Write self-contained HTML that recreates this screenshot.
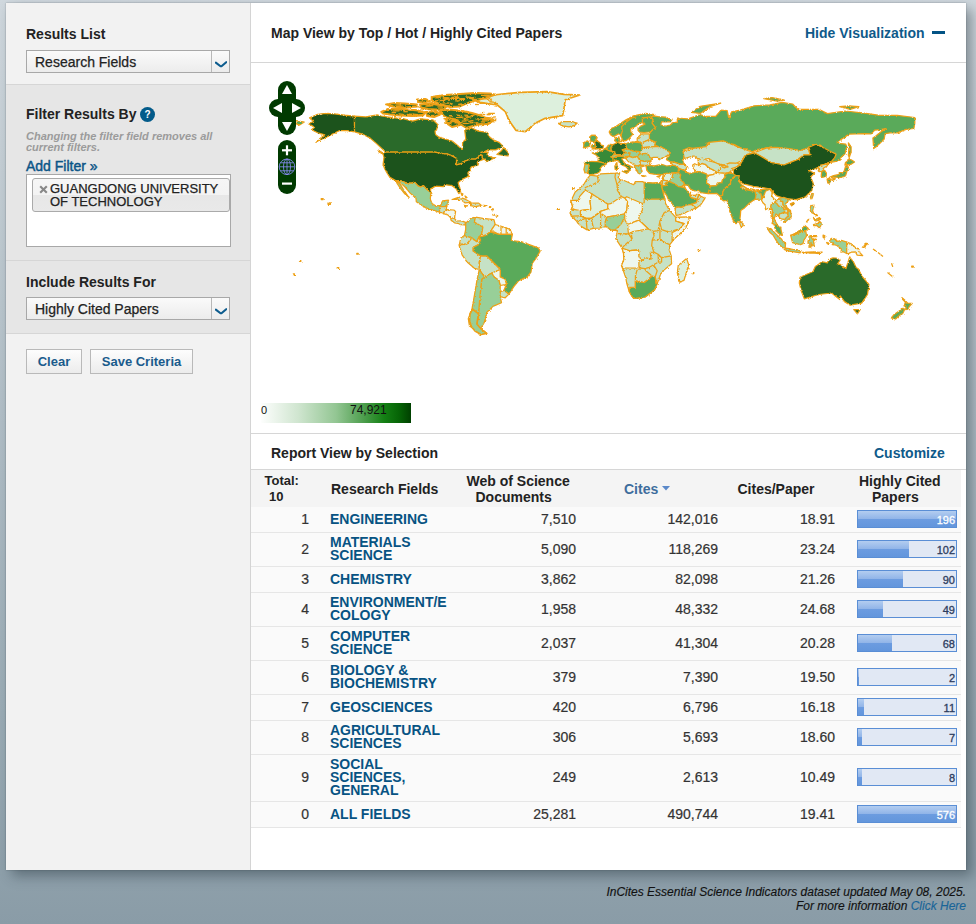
<!DOCTYPE html>
<html><head><meta charset="utf-8">
<style>
*{margin:0;padding:0;box-sizing:border-box}
html,body{width:976px;height:924px;overflow:hidden}
body{font-family:"Liberation Sans",sans-serif;background:linear-gradient(#d0d8de 0px,#c5cfd5 160px,#b2bfc7 410px,#9cadb6 700px,#8a9ca7 924px);position:relative;color:#222}
.abs{position:absolute}
.tk{-webkit-text-stroke:0.25px currentColor}
#panel{position:absolute;left:6px;top:3px;width:960px;height:867px;background:#fff;box-shadow:6px 6px 12px rgba(30,45,55,.42),0 0 1.5px rgba(30,45,55,.4)}
#side{position:absolute;left:0;top:0;width:245px;height:867px;background:#f2f2f2;border-right:1px solid #d4d4d4}
.sec{position:absolute;left:0;width:244px;border-bottom:1px solid #d6d6d6}
.h{position:absolute;font-weight:bold;font-size:14px;color:#222;white-space:nowrap;line-height:16px}
.sel{position:absolute;left:20px;width:204px;height:23px;border:1px solid #a8a8a8;background:linear-gradient(#fafafa,#ececec)}
.sel .t{-webkit-text-stroke:0.25px currentColor;position:absolute;left:8px;top:3px;font-size:14px;line-height:16px;color:#222;white-space:nowrap}
.sel .d{position:absolute;left:184px;top:0;width:1px;height:21px;background:#b8b8b8}
.sel svg{position:absolute;left:188px;top:9.5px}
.btn{position:absolute;top:346px;height:25px;border:1px solid #b9b9b9;background:linear-gradient(#fdfdfd,#ececec);font-weight:bold;font-size:13px;color:#1a5b8c;line-height:23px;text-align:center;white-space:nowrap}
.blue{color:#0f5a8a}
.th{position:absolute;font-weight:bold;font-size:14px;line-height:16px;color:#222;white-space:nowrap}
.num{-webkit-text-stroke:0.2px currentColor;position:absolute;font-size:14px;line-height:16px;color:#333;white-space:nowrap;text-align:right}
.fld{position:absolute;font-weight:bold;font-size:14px;line-height:13px;color:#075383;white-space:nowrap}
.bar{position:absolute;left:857px;width:100px;height:18px;border:1px solid #5a8ed5;background:#e1e8f4}
.bar .fill{position:absolute;left:0;top:0;height:16px;background:linear-gradient(#b3cdf0 0%,#90b4e8 50%,#6c9ce0 50%,#6396dc 100%)}
.bar .bt{position:absolute;right:1px;top:2.6px;font-size:11px;line-height:13px;font-weight:normal;-webkit-text-stroke:0.3px currentColor}
</style></head><body>
<div id="panel">
  <div id="side">
    <div class="sec" style="top:0;height:82px;background:#f2f2f2">
      <div class="h" style="left:20px;top:23px">Results List</div>
      <div class="sel" style="top:47px"><div class="t">Research Fields</div><div class="d"></div>
        <svg width="12" height="7" viewBox="0 0 12 7"><path d="M0.8,1.6 L5.2,5 Q6,5.6 6.8,5 L11.2,1.2" fill="none" stroke="#0d5c8e" stroke-width="2.1" stroke-linecap="round"/></svg></div>
    </div>
    <div class="sec" style="top:82px;height:176px;background:#e6e6e6">
      <div class="h" style="left:20px;top:103px;top:21px">Filter Results By</div>
      <div class="abs" style="left:134px;top:22px;width:15px;height:15px;border-radius:50%;background:#035b8a;color:#fff;font-weight:bold;font-size:10px;line-height:15px;text-align:center">?</div>
      <div class="abs" style="left:20px;top:45.8px;font-size:11px;line-height:11.3px;font-style:italic;font-weight:bold;color:#9b9b9b;white-space:nowrap">Changing the filter field removes all<br>current filters.</div>
      <div class="abs" style="left:20px;top:73px;font-size:14px;-webkit-text-stroke:0.45px currentColor;color:#0b5587;line-height:16px;white-space:nowrap">Add Filter »</div>
      <div class="abs" style="left:20px;top:89px;width:205px;height:73px;background:#fff;border:1px solid #a8a8a8">
        <div class="abs" style="left:5px;top:3px;width:198px;height:34px;border:1px solid #aaa;border-radius:3px;background:linear-gradient(#f6f6f6 0,#f3f3f3 50%,#e7e7e7 50%,#e9e9e9 100%)">
          <svg class="abs" style="left:6px;top:6px" width="9" height="9" viewBox="0 0 9 9"><path d="M1.2,1.2 L7.8,7.8 M7.8,1.2 L1.2,7.8" stroke="#888" stroke-width="2.1"/></svg>
          <div class="abs tk" style="left:17px;top:2.5px;font-size:13px;line-height:13px;color:#222;white-space:nowrap">GUANGDONG UNIVERSITY<br>OF TECHNOLOGY</div>
        </div>
      </div>
    </div>
    <div class="sec" style="top:258px;height:73px;background:#e6e6e6">
      <div class="h" style="left:20px;top:13px">Include Results For</div>
      <div class="sel" style="top:36px"><div class="t">Highly Cited Papers</div><div class="d"></div>
        <svg width="12" height="7" viewBox="0 0 12 7"><path d="M0.8,1.6 L5.2,5 Q6,5.6 6.8,5 L11.2,1.2" fill="none" stroke="#0d5c8e" stroke-width="2.1" stroke-linecap="round"/></svg></div>
    </div>
    <div class="btn" style="left:20px;width:56px">Clear</div>
    <div class="btn" style="left:84px;width:103px">Save Criteria</div>
  </div>
  <!-- main -->
  <div id="main" class="abs" style="left:245px;top:0;width:715px;height:867px">
    <div class="h" style="left:20px;top:22px;font-size:14px">Map View by Top / Hot / Highly Cited Papers</div>
    <div class="h blue" style="left:554px;top:22px">Hide Visualization</div>
    <div class="abs" style="left:681px;top:28px;width:13px;height:3px;background:#035385"></div>
    <div class="abs" style="left:0;top:59px;width:715px;height:1px;background:#d6d6d6"></div>
    
    <div class="abs" style="left:10px;top:400px;width:150px;height:20px;background:linear-gradient(90deg,#fdfefd 0%,#cfe5cf 25%,#93c693 50%,#4f9f4f 68%,#148014 82%,#066406 92%,#004000 100%)"></div>
    <div class="abs" style="left:10px;top:401px;font-size:11px;line-height:13px;color:#111">0</div>
    <div class="abs" style="left:99px;top:400px;font-size:12px;line-height:14px;color:#111">74,921</div>
    <div class="abs" style="left:0;top:430px;width:715px;height:1px;background:#d6d6d6"></div>
    <div class="h" style="left:20px;top:442px">Report View by Selection</div>
    <div class="h blue" style="left:623px;top:442px">Customize</div>
    <div class="abs" style="left:0;top:466px;width:715px;height:1px;background:#d6d6d6"></div>
    
  </div>
</div>

<div class="abs" style="left:0;top:0;width:976px;height:924px">
<div class="abs" style="left:251px;top:470px;width:710px;height:37px;background:#f4f4f4"></div>
<div class="abs" style="left:251px;top:507px;width:710px;height:25px;background:#fafafa"></div>
<div class="abs" style="left:251px;top:532px;width:710px;height:1px;background:#e6e6e6"></div>
<div class="num" style="right:667px;top:510.65px">1</div>
<div class="num" style="right:400px;top:510.65px">7,510</div>
<div class="num" style="right:258px;top:510.65px">142,016</div>
<div class="num" style="right:141px;top:510.65px">18.91</div>
<div class="fld" style="left:330px;top:510.65px;line-height:16px">ENGINEERING</div>
<div class="bar" style="top:510px"><div class="fill" style="width:98.0px"></div><div class="bt" style="color:#fff">196</div></div>
<div class="abs" style="left:251px;top:533px;width:710px;height:33px;background:#fafafa"></div>
<div class="abs" style="left:251px;top:566px;width:710px;height:1px;background:#e6e6e6"></div>
<div class="num" style="right:667px;top:540.65px">2</div>
<div class="num" style="right:400px;top:540.65px">5,090</div>
<div class="num" style="right:258px;top:540.65px">118,269</div>
<div class="num" style="right:141px;top:540.65px">23.24</div>
<div class="fld" style="left:330px;top:535.50px">MATERIALS<br>SCIENCE</div>
<div class="bar" style="top:540px"><div class="fill" style="width:51.0px"></div><div class="bt" style="color:#2c3c5e">102</div></div>
<div class="abs" style="left:251px;top:567px;width:710px;height:25px;background:#fafafa"></div>
<div class="abs" style="left:251px;top:592px;width:710px;height:1px;background:#e6e6e6"></div>
<div class="num" style="right:667px;top:570.65px">3</div>
<div class="num" style="right:400px;top:570.65px">3,862</div>
<div class="num" style="right:258px;top:570.65px">82,098</div>
<div class="num" style="right:141px;top:570.65px">21.26</div>
<div class="fld" style="left:330px;top:570.65px;line-height:16px">CHEMISTRY</div>
<div class="bar" style="top:570px"><div class="fill" style="width:45.0px"></div><div class="bt" style="color:#2c3c5e">90</div></div>
<div class="abs" style="left:251px;top:593px;width:710px;height:33px;background:#fafafa"></div>
<div class="abs" style="left:251px;top:626px;width:710px;height:1px;background:#e6e6e6"></div>
<div class="num" style="right:667px;top:600.65px">4</div>
<div class="num" style="right:400px;top:600.65px">1,958</div>
<div class="num" style="right:258px;top:600.65px">48,332</div>
<div class="num" style="right:141px;top:600.65px">24.68</div>
<div class="fld" style="left:330px;top:595.50px">ENVIRONMENT/E<br>COLOGY</div>
<div class="bar" style="top:600px"><div class="fill" style="width:24.5px"></div><div class="bt" style="color:#2c3c5e">49</div></div>
<div class="abs" style="left:251px;top:627px;width:710px;height:33px;background:#fafafa"></div>
<div class="abs" style="left:251px;top:660px;width:710px;height:1px;background:#e6e6e6"></div>
<div class="num" style="right:667px;top:634.65px">5</div>
<div class="num" style="right:400px;top:634.65px">2,037</div>
<div class="num" style="right:258px;top:634.65px">41,304</div>
<div class="num" style="right:141px;top:634.65px">20.28</div>
<div class="fld" style="left:330px;top:629.50px">COMPUTER<br>SCIENCE</div>
<div class="bar" style="top:634px"><div class="fill" style="width:34.0px"></div><div class="bt" style="color:#2c3c5e">68</div></div>
<div class="abs" style="left:251px;top:661px;width:710px;height:33px;background:#fafafa"></div>
<div class="abs" style="left:251px;top:694px;width:710px;height:1px;background:#e6e6e6"></div>
<div class="num" style="right:667px;top:668.65px">6</div>
<div class="num" style="right:400px;top:668.65px">379</div>
<div class="num" style="right:258px;top:668.65px">7,390</div>
<div class="num" style="right:141px;top:668.65px">19.50</div>
<div class="fld" style="left:330px;top:663.50px">BIOLOGY &amp;<br>BIOCHEMISTRY</div>
<div class="bar" style="top:668px"><div class="fill" style="width:1.0px"></div><div class="bt" style="color:#2c3c5e">2</div></div>
<div class="abs" style="left:251px;top:695px;width:710px;height:25px;background:#fafafa"></div>
<div class="abs" style="left:251px;top:720px;width:710px;height:1px;background:#e6e6e6"></div>
<div class="num" style="right:667px;top:698.65px">7</div>
<div class="num" style="right:400px;top:698.65px">420</div>
<div class="num" style="right:258px;top:698.65px">6,796</div>
<div class="num" style="right:141px;top:698.65px">16.18</div>
<div class="fld" style="left:330px;top:698.65px;line-height:16px">GEOSCIENCES</div>
<div class="bar" style="top:698px"><div class="fill" style="width:5.5px"></div><div class="bt" style="color:#2c3c5e">11</div></div>
<div class="abs" style="left:251px;top:721px;width:710px;height:33px;background:#fafafa"></div>
<div class="abs" style="left:251px;top:754px;width:710px;height:1px;background:#e6e6e6"></div>
<div class="num" style="right:667px;top:728.65px">8</div>
<div class="num" style="right:400px;top:728.65px">306</div>
<div class="num" style="right:258px;top:728.65px">5,693</div>
<div class="num" style="right:141px;top:728.65px">18.60</div>
<div class="fld" style="left:330px;top:723.50px">AGRICULTURAL<br>SCIENCES</div>
<div class="bar" style="top:728px"><div class="fill" style="width:3.5px"></div><div class="bt" style="color:#2c3c5e">7</div></div>
<div class="abs" style="left:251px;top:755px;width:710px;height:46px;background:#fafafa"></div>
<div class="abs" style="left:251px;top:801px;width:710px;height:1px;background:#e6e6e6"></div>
<div class="num" style="right:667px;top:769.15px">9</div>
<div class="num" style="right:400px;top:769.15px">249</div>
<div class="num" style="right:258px;top:769.15px">2,613</div>
<div class="num" style="right:141px;top:769.15px">10.49</div>
<div class="fld" style="left:330px;top:757.50px">SOCIAL<br>SCIENCES,<br>GENERAL</div>
<div class="bar" style="top:768px"><div class="fill" style="width:4.0px"></div><div class="bt" style="color:#2c3c5e">8</div></div>
<div class="abs" style="left:251px;top:802px;width:710px;height:25px;background:#fafafa"></div>
<div class="abs" style="left:251px;top:827px;width:710px;height:1px;background:#e6e6e6"></div>
<div class="num" style="right:667px;top:805.65px">0</div>
<div class="num" style="right:400px;top:805.65px">25,281</div>
<div class="num" style="right:258px;top:805.65px">490,744</div>
<div class="num" style="right:141px;top:805.65px">19.41</div>
<div class="fld" style="left:330px;top:805.65px;line-height:16px">ALL FIELDS</div>
<div class="bar" style="top:805px"><div class="fill" style="width:98.0px"></div><div class="bt" style="color:#fff">576</div></div>
<div class="th" style="left:264.5px;top:473.2px;font-size:13px">Total:</div>
<div class="th" style="left:269px;top:489.1px;font-size:13px">10</div>
<div class="th" style="left:331px;top:480.75px">Research Fields</div>
<div class="th" style="left:466.5px;top:472.85px">Web of Science</div>
<div class="th" style="left:475.5px;top:488.85px">Documents</div>
<div class="th" style="left:624px;top:480.55px;color:#3e6d9d">Cites</div>
<svg class="abs" style="left:661.5px;top:486px" width="8" height="5" viewBox="0 0 8 5"><path d="M0,0 H8 L4,4.5 Z" fill="#5b89c9"/></svg>
<div class="th" style="left:737.5px;top:480.85px">Cites/Paper</div>
<div class="th" style="left:859px;top:472.65px">Highly Cited</div>
<div class="th" style="left:872px;top:488.55px">Papers</div>
</div>
<svg id="map" class="abs" style="left:251px;top:63px" width="715" height="370" viewBox="251 63 715 370">
<defs><filter id="jag" x="-2%" y="-2%" width="104%" height="104%"><feTurbulence type="turbulence" baseFrequency="0.9" numOctaves="1" seed="4" result="t"/><feDisplacementMap in="SourceGraphic" in2="t" scale="1.0" xChannelSelector="R" yChannelSelector="G"/></filter></defs><g filter="url(#jag)">
<g stroke="#eea014" stroke-width="1.25" stroke-linejoin="round">
<polygon fill="#5aaa5a" points="296.0,120.5 304.3,122.0 299.2,125.1 296.0,123.6"/>
<polygon fill="#1b521b" points="309.5,117.9 317.7,114.3 325.9,113.3 334.1,113.8 344.3,115.2 354.5,116.2 354.5,131.8 347.4,130.7 339.2,130.7 333.0,133.8 326.9,136.9 315.6,142.0 324.8,134.8 317.7,132.8 311.5,129.7 314.6,127.2 308.4,123.6 313.6,121.5"/>
<polygon fill="#296a29" points="354.5,116.2 365.8,116.9 377.1,114.9 381.3,116.0 392.5,117.7 403.8,118.8 412.8,121.1 420.7,118.8 433.1,120.0 437.6,124.4 436.5,130.1 435.0,131.1 435.5,134.6 439.0,137.2 448.9,140.2 452.1,141.0 457.3,145.2 460.8,148.2 462.4,149.2 462.6,142.4 465.8,139.1 464.7,130.1 471.4,127.8 478.3,131.1 487.0,132.3 488.8,136.3 493.1,139.8 499.2,142.4 502.7,145.9 500.1,147.9 495.7,149.9 487.9,149.9 484.4,151.7 480.9,152.4 488.2,152.2 487.0,154.7 488.8,156.4 494.0,157.8 495.7,157.3 490.5,159.9 485.6,161.7 485.3,159.0 483.5,159.4 482.1,157.8 482.1,155.4 479.7,154.7 478.3,157.3 475.7,159.0 470.1,159.0 467.0,160.4 462.6,162.0 462.2,163.4 456.5,164.8 455.6,163.7 456.5,162.5 456.5,158.5 453.0,156.4 446.9,153.8 444.2,153.8 434.6,152.1 385.7,152.1 377.1,144.1 369.9,137.9 361.7,133.8 354.5,131.8"/>
<polygon fill="#296a29" points="496.9,154.5 501.3,150.8 503.6,147.5 508.5,152.9 508.0,156.0 503.6,155.5"/>
<polygon fill="#296a29" points="378.0,150.0 383.0,153.0 384.0,154.5 379.0,152.0"/>
<polygon fill="#1b521b" points="385.7,152.1 434.6,152.1 444.2,153.8 446.9,153.8 453.0,156.4 456.5,158.5 456.5,162.5 455.6,163.7 456.5,164.8 462.2,163.4 462.6,162.0 467.0,160.4 470.1,159.0 475.7,159.0 478.3,157.3 479.7,154.7 482.1,155.4 482.1,157.8 483.5,159.4 477.9,161.3 477.2,163.0 478.3,164.8 474.8,166.0 471.3,166.9 469.5,170.4 467.8,173.0 468.7,175.6 467.0,177.0 462.6,179.1 458.2,182.6 458.4,184.0 459.8,187.8 460.6,191.3 458.9,193.6 456.1,188.7 452.1,185.7 444.8,184.7 443.4,186.6 435.5,186.1 430.4,189.1 430.8,192.4 426.8,189.6 423.5,185.6 420.7,187.0 418.0,185.9 414.6,182.1 411.6,183.0 406.7,183.0 400.3,180.5 396.1,180.9 389.9,177.4 386.6,172.1 384.4,168.1 383.1,164.3 384.0,157.3 382.8,153.1"/>
<polygon fill="#98cf98" points="396.1,180.9 400.3,180.5 406.7,183.0 411.6,183.0 414.6,182.1 418.0,185.9 420.7,187.0 423.5,185.6 426.8,189.6 430.8,192.4 430.3,199.2 432.0,203.5 435.5,205.8 440.7,205.3 442.5,200.9 448.6,200.1 446.9,205.3 444.5,208.0 439.5,212.1 432.9,210.2 425.9,207.9 416.3,201.8 416.0,198.3 410.2,193.1 405.0,187.0 400.3,182.6"/>
<polygon fill="#98cf98" points="396.1,180.9 397.1,183.5 400.6,188.7 405.0,194.0 409.3,197.4 407.6,195.7 404.1,190.5 400.3,184.3"/>
<polygon fill="#c6e2c6" points="558.6,123.6 566.6,121.6 577.2,123.0 574.5,125.6 565.2,126.3"/>
<polygon fill="#c6e2c6" points="452.1,199.5 459.1,197.1 465.2,199.2 470.9,202.3 465.2,202.9 460.8,199.5 455.6,199.2"/>
<polygon fill="#c6e2c6" points="470.6,203.0 478.3,203.0 481.2,205.3 475.7,206.7 470.6,205.7"/>
<polygon fill="#c6e2c6" points="463.6,205.3 467.4,205.8 465.0,206.5"/>
<polygon fill="#c6e2c6" points="483.2,205.3 485.9,205.7 484.0,206.3"/>
<polygon fill="#c6e2c6" points="461.0,193.0 463.0,194.0 462.0,195.5"/>
<polygon fill="#c6e2c6" points="465.0,196.0 467.0,197.5 466.0,198.0"/>
<polygon fill="#c6e2c6" points="439.5,212.1 439.5,206.5 445.1,206.5 446.6,205.3 446.4,209.7 444.8,210.5 443.4,213.7"/>
<polygon fill="#eef7ee" points="444.8,210.5 446.4,209.7 453.8,210.0 455.6,211.4 454.4,218.4 450.9,218.0 447.8,214.9 443.4,213.7"/>
<polygon fill="#c6e2c6" points="454.4,218.4 456.5,221.0 461.7,220.8 465.6,222.4 464.7,225.0 460.8,224.7 457.8,223.3 454.5,222.8 450.9,220.1 450.9,218.0"/>
<polygon fill="#98cf98" points="465.7,223.3 470.6,218.4 475.5,217.1 474.3,222.0 482.9,227.0 481.6,234.3 479.2,236.8 476.7,241.7 471.8,238.0 464.4,235.6 465.7,229.4"/>
<polygon fill="#c6e2c6" points="475.5,217.1 482.9,218.4 493.9,219.6 495.2,224.5 490.2,231.9 485.3,235.6 481.6,234.3 482.9,227.0 474.3,222.0"/>
<polygon fill="#eef7ee" points="495.2,224.5 503.8,227.0 509.9,229.4 512.4,234.3 498.9,234.3 493.9,231.9 490.2,231.9"/>
<polygon fill="#c6e2c6" points="464.4,235.6 471.8,238.0 466.9,244.2 459.5,244.2 460.7,238.0"/>
<polygon fill="#c6e2c6" points="459.0,244.9 466.9,244.2 471.8,238.0 476.7,241.7 479.2,236.8 480.6,240.0 478.1,244.9 473.2,247.4 473.2,251.1 480.6,256.0 479.3,262.1 479.3,269.5 474.4,268.3 467.1,262.1 462.1,254.8 459.7,247.4"/>
<polygon fill="#5aaa5a" points="479.2,236.8 485.3,235.6 490.2,231.9 498.9,234.3 512.4,234.3 511.2,240.5 521.0,241.7 538.2,247.9 540.2,251.1 535.9,258.4 532.2,263.4 531.0,272.0 527.3,276.9 518.7,280.6 513.8,286.7 508.9,294.1 503.9,290.4 506.4,284.3 505.2,279.3 500.2,276.9 500.2,269.5 496.6,265.8 486.7,256.0 480.6,256.0 473.2,251.1 473.2,247.4 478.1,244.9 480.6,240.0"/>
<polygon fill="#c6e2c6" points="480.6,256.0 486.7,256.0 496.6,265.8 500.2,269.5 491.6,273.2 484.3,276.9 479.3,269.5 479.3,262.1"/>
<polygon fill="#eef7ee" points="491.6,273.2 500.2,269.5 500.2,276.9 505.2,279.3 506.4,284.3 500.2,285.5 499.0,280.6 494.1,276.9"/>
<polygon fill="#c6e2c6" points="500.2,291.6 503.9,290.4 508.9,294.1 505.2,297.8 500.2,296.6"/>
<polygon fill="#98cf98" points="484.3,276.9 491.6,273.2 494.1,276.9 499.0,280.6 500.2,285.5 500.2,291.6 500.2,296.6 501.5,302.7 492.9,306.4 486.7,312.5 484.3,322.4 480.6,328.5 486.7,333.4 476.9,331.0 476.9,324.0 478.5,313.8 479.5,301.5 480.6,289.2 481.8,279.3"/>
<polygon fill="#98cf98" points="479.3,269.5 484.3,276.9 481.8,279.3 480.6,289.2 479.5,301.5 478.5,313.8 476.9,324.0 476.9,331.0 469.5,326.1 468.3,318.7 472.0,308.9 474.4,295.3 476.9,280.6"/>
<polygon fill="#5aaa5a" points="652.9,115.9 658.1,116.6 665.1,117.1 672.1,119.7 670.3,121.8 661.6,121.8 660.7,125.0 665.1,126.2 670.3,125.0 673.0,122.4 677.3,122.4 677.3,118.0 687.8,118.9 700.0,114.5 705.3,116.3 715.7,116.3 721.0,110.1 727.1,110.5 728.8,118.0 731.5,111.9 740.2,110.1 754.1,105.8 769.9,104.9 782.1,102.3 792.6,104.0 797.8,109.3 818.8,109.3 827.5,113.6 844.9,111.0 862.4,112.8 879.9,115.4 897.3,115.4 914.8,117.5 914.8,123.2 913.9,128.5 906.0,129.3 897.3,132.8 890.3,132.8 885.1,133.7 884.2,139.0 879.9,143.3 877.2,145.9 873.7,148.6 872.9,138.1 875.5,136.3 880.7,132.0 886.0,128.5 879.9,129.7 874.6,130.2 871.1,133.9 864.1,133.7 849.3,134.1 837.1,141.9 839.7,143.3 845.8,144.2 846.7,146.8 844.9,153.8 837.1,161.1 830.8,162.3 828.7,163.7 829.6,162.5 832.7,159.0 835.3,153.3 829.2,153.8 820.5,145.1 812.6,144.5 809.1,149.4 806.2,151.2 803.0,150.6 789.1,151.2 785.6,149.8 771.6,149.4 771.6,146.8 757.6,149.4 752.4,151.7 747.2,148.9 741.9,148.9 734.9,144.7 728.8,143.7 722.7,141.2 714.0,142.4 706.1,143.3 707.0,148.6 696.5,148.9 688.7,147.7 682.6,150.3 686.1,156.4 684.3,156.9 683.4,158.2 682.6,159.9 683.4,162.5 684.8,164.4 680.8,164.4 673.8,162.2 670.3,161.8 669.8,161.5 666.5,159.6 666.8,158.2 669.5,155.5 667.4,155.5 670.3,152.9 666.8,150.3 660.7,146.8 657.2,146.3 654.6,145.1 655.5,142.4 649.4,139.6 649.4,133.9 652.0,130.2 655.5,127.8 652.0,123.2 652.9,119.7 651.0,117.1"/>
<polygon fill="#5aaa5a" points="635.4,141.7 640.3,141.7 639.8,142.8 634.7,142.6"/>
<polygon fill="#5aaa5a" points="691.0,112.4 700.2,106.3 720.7,103.2 710.5,106.3 700.2,113.4"/>
<polygon fill="#5aaa5a" points="763.8,98.6 772.0,97.6 784.3,100.1 777.1,101.1"/>
<polygon fill="#5aaa5a" points="848.4,142.8 851.1,146.8 851.1,152.0 849.3,157.3 848.4,155.5 848.8,148.6"/>
<polygon fill="#5aaa5a" points="839.7,106.7 848.4,105.8 858.9,106.7 850.2,109.3"/>
<polygon fill="#5aaa5a" points="612.7,136.3 610.5,134.8 609.2,132.1 611.2,128.5 616.2,126.2 625.6,120.1 633.5,115.9 645.5,113.3 654.8,114.7 652.9,115.9 651.0,117.1 642.4,117.8 642.6,122.7 639.1,123.1 635.9,126.2 630.7,128.6 630.7,131.6 632.8,134.1 629.0,138.6 625.8,140.7 623.2,140.9 621.3,136.9 620.1,134.4 619.0,133.7 617.1,134.6 614.5,136.2"/>
<polygon fill="#5aaa5a" points="642.6,122.7 642.4,117.8 651.0,117.1 652.9,119.7 652.0,123.2 655.5,127.8 652.0,130.2 649.0,132.0 644.1,132.5 639.3,132.1 638.0,130.2 638.2,127.4 645.0,124.1"/>
<polygon fill="#296a29" points="590.5,150.1 592.6,148.7 595.3,149.1 602.9,148.4 603.5,145.6 601.0,145.1 600.3,143.1 598.1,141.6 595.3,139.8 597.0,137.9 595.3,135.3 591.8,135.3 589.7,137.2 590.5,141.0 594.4,141.7 595.3,144.4 592.6,144.5 591.2,147.0 595.3,147.7 592.6,148.7"/>
<polygon fill="#5aaa5a" points="591.8,135.3 595.3,135.3 597.0,137.9 595.3,139.8 597.2,140.3 595.3,141.6 590.5,141.0 589.7,137.2"/>
<polygon fill="#5aaa5a" points="591.2,147.0 595.3,147.7 595.3,144.4 592.6,144.5"/>
<polygon fill="#5aaa5a" points="587.6,140.9 590.0,143.3 590.0,144.5 589.3,146.5 583.4,147.9 583.9,144.5 583.0,143.0 585.7,141.6"/>
<polygon fill="#c6e2c6" points="562.1,125.9 558.6,123.2 562.1,121.7 572.6,121.5 576.1,123.2 574.3,125.3 569.1,126.9"/>
<polygon fill="#5aaa5a" points="614.6,140.7 615.5,137.9 619.0,136.9 618.8,139.8 622.3,140.5 621.5,141.7 617.1,141.9"/>
<polygon fill="#5aaa5a" points="606.4,147.9 608.4,145.2 610.1,144.4 613.1,144.5 611.0,147.2 611.3,150.3 610.1,151.2 604.9,148.6"/>
<polygon fill="#296a29" points="613.1,144.5 615.5,143.5 617.1,141.9 619.7,143.3 625.3,143.5 626.0,145.9 626.7,148.6 622.3,149.8 624.6,152.4 623.2,154.7 618.0,154.7 613.8,154.5 614.8,152.0 611.3,151.2 611.3,150.3 611.0,147.2"/>
<polygon fill="#388a38" points="604.9,148.6 603.3,150.0 600.5,151.2 598.2,150.8 597.7,152.6 592.3,152.9 596.1,155.0 598.4,157.3 597.9,161.6 605.7,163.4 608.4,161.6 613.6,161.1 612.7,157.5 611.0,156.8 613.8,154.5 614.8,152.0 611.3,151.2 610.1,151.2"/>
<polygon fill="#388a38" points="616.9,162.5 617.1,165.3 615.5,164.4"/>
<polygon fill="#388a38" points="597.9,161.6 586.5,161.3 584.3,162.5 585.0,164.3 589.2,164.3 588.3,168.6 587.6,172.6 590.0,174.7 591.2,174.6 597.0,173.5 599.3,172.0 600.8,169.9 600.0,168.6 602.1,166.0 606.1,164.4 605.7,163.4"/>
<polygon fill="#98cf98" points="585.0,164.3 589.2,164.3 588.3,168.6 587.6,172.6 585.0,173.0 583.9,169.5"/>
<polygon fill="#388a38" points="613.6,161.1 616.2,160.1 618.8,161.1 619.7,163.4 622.3,165.1 625.8,166.5 628.1,169.2 627.7,171.3 628.8,171.3 630.2,169.5 630.5,166.9 632.8,167.4 628.4,165.1 624.9,163.4 622.2,159.9 622.0,158.3 624.4,158.0 624.1,156.4 618.8,155.9 612.7,157.5"/>
<polygon fill="#388a38" points="622.2,171.1 627.7,170.7 626.9,173.5"/>
<polygon fill="#388a38" points="614.8,165.8 617.6,166.0 617.3,169.3 615.2,169.5"/>
<polygon fill="#98cf98" points="611.0,156.8 613.8,154.5 618.0,154.7 623.2,154.7 624.6,152.4 630.2,152.9 629.3,156.4 624.1,156.4 618.8,155.9 612.7,157.5"/>
<polygon fill="#5aaa5a" points="625.3,143.5 632.8,141.9 641.5,143.0 642.1,145.9 642.4,148.9 639.8,151.7 633.3,151.2 626.7,148.6 626.0,145.9"/>
<polygon fill="#98cf98" points="622.3,149.8 626.7,148.6 633.3,151.2 639.8,151.7 639.8,153.8 637.2,156.4 632.8,157.6 629.3,156.4 630.2,152.9 624.6,152.4"/>
<polygon fill="#c6e2c6" points="637.2,138.4 638.0,137.2 641.5,133.9 649.4,133.9 649.4,139.6 646.8,140.7 641.5,143.0 637.2,141.0"/>
<polygon fill="#c6e2c6" points="641.5,143.0 646.8,140.7 649.4,139.6 655.5,142.4 654.6,145.1 657.2,146.3 642.4,147.7 642.1,145.9"/>
<polygon fill="#c6e2c6" points="642.4,147.7 657.2,146.3 660.7,146.8 666.8,150.3 670.3,152.9 667.4,155.5 661.6,158.2 659.0,159.9 658.1,157.3 653.4,157.3 650.3,158.3 647.6,153.3 639.8,153.8 639.8,151.7 642.4,148.9"/>
<polygon fill="#98cf98" points="639.8,153.8 647.6,153.3 650.3,158.3 652.2,158.7 650.4,161.1 644.1,161.3 639.8,160.4 637.2,156.4"/>
<polygon fill="#c6e2c6" points="639.8,160.4 644.1,161.3 650.4,161.1 649.4,164.3 645.9,165.5 640.3,165.1"/>
<polygon fill="#c6e2c6" points="624.4,158.0 629.3,156.4 632.8,157.6 637.2,156.4 639.8,160.4 640.3,165.1 636.3,166.0 634.2,164.3 628.4,161.6 625.8,158.7"/>
<polygon fill="#98cf98" points="634.2,164.3 636.3,166.0 640.3,165.1 645.9,165.5 640.7,167.2 642.1,171.3 639.8,173.9 638.0,173.0 637.2,170.4 635.4,168.5 634.5,166.4"/>
<polygon fill="#98cf98" points="641.5,175.6 645.9,176.1 643.3,176.5"/>
<polygon fill="#5aaa5a" points="645.9,165.5 651.1,165.7 654.6,165.8 661.6,164.3 666.8,166.0 673.0,165.1 676.5,165.8 678.7,168.3 677.7,172.6 674.4,172.8 664.2,173.5 663.4,174.7 657.8,174.4 653.8,174.2 649.4,173.3 646.8,170.4 646.4,167.8"/>
<polygon fill="#c6e2c6" points="670.3,161.8 673.8,162.2 680.8,164.4 684.8,164.4 686.9,167.2 685.2,170.4 680.8,169.7 678.7,168.3 676.5,165.8 673.0,165.1"/>
<polygon fill="#c6e2c6" points="656.9,176.5 660.7,175.4 659.0,177.2"/>
<polygon fill="#c6e2c6" points="683.0,151.0 694.5,148.1 706.0,146.6 708.9,142.3 723.2,140.9 737.5,146.6 749.0,151.0 754.8,152.4 745.7,154.8 740.8,161.0 733.4,164.7 726.1,165.9 716.2,163.4 708.9,158.5 699.0,159.8 694.1,156.1 692.9,156.1 684.3,158.5"/>
<polygon fill="#eef7ee" points="692.7,165.1 694.8,163.7 698.3,165.5 701.8,163.4 705.3,164.3 708.8,167.8 713.1,169.9 716.6,172.1 713.1,174.7 707.4,175.6 706.1,173.9 698.3,171.3 694.8,172.5 694.6,169.5 693.0,167.8"/>
<polygon fill="#c6e2c6" points="698.3,159.0 702.6,158.2 707.0,160.3 712.2,161.6 715.7,162.7 721.0,165.1 724.5,165.1 728.0,166.4 724.5,167.8 721.8,166.9 719.2,169.5 717.5,172.3 716.6,172.1 713.1,169.9 708.8,167.8 705.3,164.3 701.8,163.4 698.3,165.5"/>
<polygon fill="#c6e2c6" points="721.0,165.1 724.5,165.1 729.7,162.9 740.2,163.4 736.7,166.9 731.5,168.6 730.6,172.1 725.3,173.3 719.2,172.8 717.5,172.3 719.2,169.5 721.8,166.9 724.5,167.8 728.0,166.4"/>
<polygon fill="#c6e2c6" points="754.8,152.4 766.2,148.1 774.6,147.3 785.4,148.0 800.7,150.3 808.4,147.3 810.0,154.9 803.8,154.9 797.3,159.7 784.0,165.0 770.6,162.3 760.0,155.7 754.7,153.0"/>
<polygon fill="#1b521b" points="733.4,169.6 740.0,165.0 745.7,154.8 754.7,153.0 760.0,155.7 770.6,162.3 784.0,165.0 797.3,159.7 803.8,154.9 810.0,154.9 808.4,147.3 816.1,144.2 825.3,148.8 836.1,154.2 834.5,158.0 831.9,161.0 822.6,165.0 814.6,169.0 807.9,170.3 814.6,173.0 810.6,177.0 813.3,183.6 811.9,190.3 805.3,196.9 795.9,199.6 784.0,198.3 776.0,195.6 770.6,189.0 762.6,187.6 753.3,186.3 742.7,183.6 739.6,180.7 733.4,175.0"/>
<polygon fill="#5aaa5a" points="678.7,168.3 684.3,170.4 686.1,172.1 689.5,173.3 694.8,172.5 698.3,171.3 706.1,173.9 707.4,175.6 706.7,179.1 706.7,183.5 708.4,183.8 710.5,186.1 708.1,193.6 700.5,192.6 699.1,190.3 694.8,191.0 690.4,189.1 688.0,185.2 685.2,185.2 684.3,184.3 683.8,182.6 680.8,180.0 679.9,177.4 680.8,175.1 678.7,172.6"/>
<polygon fill="#98cf98" points="674.4,172.8 678.7,172.6 680.8,175.1 679.9,177.4 680.8,180.0 683.8,182.6 684.3,184.3 683.4,185.2 681.7,186.8 678.5,186.6 673.8,183.5 668.6,181.4 672.1,177.4 672.6,173.9"/>
<polygon fill="#ddf0dd" points="663.4,174.7 664.2,173.5 674.4,172.8 672.6,173.9 672.1,177.4 668.6,181.4 663.4,180.0 663.0,176.5"/>
<polygon fill="#c6e2c6" points="662.5,180.9 663.4,180.0 668.6,181.4 665.1,183.5 666.8,185.2 661.6,186.1"/>
<polygon fill="#c6e2c6" points="660.2,183.0 661.6,180.0 663.0,176.5 663.4,180.0 662.5,180.9 661.6,186.1"/>
<polygon fill="#5aaa5a" points="661.6,186.1 666.8,185.2 665.1,183.5 668.6,181.4 673.8,183.5 678.5,186.6 681.7,186.8 685.0,187.8 686.9,190.5 688.1,192.7 689.5,194.8 691.3,197.6 697.4,199.2 696.5,202.7 691.3,204.4 686.1,205.1 681.7,207.4 676.5,207.0 675.2,208.8 672.1,203.6 668.6,200.1 666.8,195.7 664.2,192.2 661.6,188.7"/>
<polygon fill="#c6e2c6" points="691.3,197.6 689.5,195.2 695.7,195.3 698.3,192.9 698.8,194.8 697.4,199.2"/>
<polygon fill="#c6e2c6" points="689.5,194.8 690.6,192.2 690.1,194.6"/>
<polygon fill="#c6e2c6" points="681.7,186.8 685.0,187.8 684.3,185.6 683.4,185.2"/>
<polygon fill="#c6e2c6" points="698.8,194.8 700.9,196.2 704.9,198.3 702.6,201.8 700.9,204.4 696.5,207.9 691.3,204.4 696.5,202.7 697.4,199.2"/>
<polygon fill="#c6e2c6" points="691.3,204.4 696.5,207.9 691.3,209.7 686.1,212.3 679.1,214.9 676.1,215.4 675.2,211.4 675.2,208.8 676.5,207.0 681.7,207.4 686.1,205.1"/>
<polygon fill="#eef7ee" points="707.4,175.6 713.1,174.7 716.6,172.1 719.2,172.8 725.3,173.3 730.6,172.1 724.5,174.7 725.3,177.4 722.7,179.1 721.8,182.6 717.5,183.0 716.6,185.6 710.5,186.1 708.4,183.8 706.7,183.5 706.7,179.1"/>
<polygon fill="#5aaa5a" points="710.5,186.1 716.6,185.6 717.5,183.0 721.8,182.6 722.7,179.1 725.3,177.4 724.5,174.7 730.6,172.1 735.8,175.6 730.6,180.0 730.6,183.5 724.5,188.7 722.7,192.2 722.7,195.2 720.1,196.2 716.6,193.3 708.1,193.6"/>
<polygon fill="#5aaa5a" points="720.1,196.2 722.7,195.2 722.7,192.2 724.5,188.7 730.6,183.5 730.6,180.0 735.8,175.6 739.3,175.6 738.4,180.9 741.9,185.2 747.2,188.7 754.1,189.6 755.0,191.3 756.8,190.8 761.1,189.6 769.9,188.7 768.1,191.3 765.5,194.8 762.9,198.3 761.7,195.7 757.6,199.2 755.0,199.5 752.4,200.9 748.9,203.6 744.5,207.9 740.7,210.5 740.4,214.9 739.8,219.6 735.8,223.5 733.5,221.0 731.5,215.8 729.4,210.5 727.6,203.6 727.3,200.4 723.6,200.9 721.0,198.7"/>
<polygon fill="#c6e2c6" points="741.9,185.2 740.5,187.5 747.2,189.8 754.5,191.5 754.1,189.6 747.2,188.7"/>
<polygon fill="#c6e2c6" points="755.9,189.9 761.1,189.6 760.8,190.8 756.8,190.8"/>
<polygon fill="#98cf98" points="755.0,191.3 756.8,190.8 761.1,193.9 761.7,199.2 757.6,199.2 755.0,199.5 755.9,195.7"/>
<polygon fill="#c6e2c6" points="739.8,220.5 742.8,223.6 743.3,225.4 741.1,227.1 739.8,223.6"/>
<polygon fill="#eef7ee" points="761.5,200.1 763.8,195.7 765.5,191.3 769.9,189.1 772.5,193.1 771.6,195.7 774.2,199.2 776.8,200.1 775.1,202.2 771.6,203.6 770.7,207.0 772.5,209.7 772.5,214.0 772.7,220.1 771.3,216.6 770.7,212.3 770.4,208.8 768.1,208.3 765.5,209.7 765.1,204.8 762.9,202.7"/>
<polygon fill="#98cf98" points="772.7,220.1 772.5,214.0 772.5,209.7 770.7,207.0 771.6,203.6 775.1,202.2 776.8,203.4 778.6,206.2 782.1,206.5 784.7,209.7 783.8,212.6 779.5,214.0 778.6,216.3 776.0,214.0 774.2,218.4 776.0,222.8 778.6,227.1 776.8,226.3 775.1,226.3 773.4,223.6 772.1,223.6"/>
<polygon fill="#c6e2c6" points="775.1,202.2 776.8,200.1 778.6,198.7 780.3,200.9 783.0,201.8 783.0,204.8 785.6,207.9 788.2,210.5 787.3,213.2 784.7,212.8 784.7,209.7 782.1,206.5 778.6,206.2 776.8,203.4"/>
<polygon fill="#98cf98" points="778.6,198.7 780.3,198.0 783.8,197.4 786.4,198.3 789.1,200.1 786.4,202.7 785.2,204.4 787.3,207.9 790.5,210.5 791.3,216.6 790.8,217.5 788.2,219.3 786.4,221.0 783.8,222.4 783.5,219.3 785.6,218.4 787.3,215.8 788.2,212.3 788.2,210.5 785.6,207.9 783.0,204.8 783.0,201.8 780.3,200.9"/>
<polygon fill="#c6e2c6" points="779.5,214.0 783.8,212.6 784.7,212.8 787.3,213.2 788.2,215.8 785.6,218.4 783.5,219.3 780.3,218.7 778.9,216.6"/>
<polygon fill="#5aaa5a" points="776.0,222.8 774.2,226.3 776.0,230.6 777.7,232.7 781.2,235.3 782.4,235.0 781.2,230.6 780.9,227.1 778.6,227.1"/>
<polygon fill="#98cf98" points="766.9,227.8 770.7,228.5 775.6,233.6 781.6,239.3 783.0,241.1 785.6,243.2 785.2,247.7 783.0,247.9 779.1,244.6 776.0,240.2 773.0,235.0 769.9,232.4"/>
<polygon fill="#98cf98" points="784.2,249.5 785.6,248.1 789.1,248.6 793.4,249.5 796.9,249.6 800.4,251.0 800.2,252.8 794.3,251.9 789.1,251.2 786.4,250.3"/>
<polygon fill="#98cf98" points="790.6,235.0 791.7,235.0 795.2,234.1 799.5,232.4 802.2,230.6 805.7,230.3 806.5,235.9 805.7,237.6 803.9,240.2 803.0,243.7 800.4,244.6 795.2,243.4 792.6,242.7 791.7,239.3"/>
<polygon fill="#5aaa5a" points="791.7,235.0 794.3,235.0 799.5,232.4 802.2,230.6 805.7,230.3 808.3,228.5 804.8,225.4 801.3,229.2 795.2,233.2"/>
<polygon fill="#98cf98" points="809.1,236.4 810.9,235.5 817.9,235.5 815.3,236.7 810.9,236.7 812.6,239.3 815.8,239.0 813.5,241.1 814.4,245.5 811.8,245.8 810.9,242.5 810.9,247.2 809.1,247.2 809.1,243.7 807.9,242.1"/>
<polygon fill="#98cf98" points="801.3,252.4 808.3,252.1 813.5,251.9 818.8,252.4 822.2,252.1 818.8,253.7 813.5,253.0 808.3,253.0"/>
<polygon fill="#98cf98" points="829.2,240.0 831.8,238.3 835.3,239.3 838.0,241.4 841.4,240.4 846.7,242.1 846.7,253.5 843.2,251.7 841.1,252.1 841.4,248.9 836.2,245.1 832.2,244.6 833.6,243.4 831.0,242.5 830.1,241.4"/>
<polygon fill="#eef7ee" points="846.7,242.1 851.9,244.2 855.1,247.2 858.0,248.6 858.9,251.6 862.7,255.6 857.2,255.1 855.4,251.9 851.1,252.1 848.4,253.7 846.7,253.5"/>
<polygon fill="#eef7ee" points="862.4,247.2 865.9,244.6 865.0,247.2"/>
<polygon fill="#98cf98" points="823.1,235.0 824.9,235.9 824.0,238.5 823.1,237.1"/>
<polygon fill="#98cf98" points="826.6,242.5 829.2,243.2 827.5,243.9"/>
<polygon fill="#98cf98" points="810.9,205.3 813.9,205.3 813.5,207.9 812.6,210.5 813.5,213.2 817.0,214.9 817.0,215.8 814.4,214.0 811.8,212.6 810.9,211.9 810.0,209.7"/>
<polygon fill="#98cf98" points="813.5,224.5 817.9,223.3 819.6,221.0 821.4,223.6 820.5,226.3 819.3,227.8 817.0,225.7 813.5,225.6"/>
<polygon fill="#98cf98" points="813.5,217.5 815.3,219.6 817.9,218.4 819.6,217.5 818.8,220.1 816.1,221.0 814.4,220.1"/>
<polygon fill="#98cf98" points="806.5,221.9 809.1,219.3 807.9,219.8"/>
<polygon fill="#c6e2c6" points="817.5,167.8 820.5,165.1 824.9,164.3 828.4,163.4 827.1,166.0 824.0,167.8 823.1,168.6 824.5,170.2 821.9,171.3 819.1,171.6 818.2,170.7 819.4,168.6"/>
<polygon fill="#5aaa5a" points="821.9,171.3 824.5,170.2 826.4,173.0 826.3,176.1 823.1,177.2 821.2,177.4 821.4,173.9"/>
<polygon fill="#5aaa5a" points="829.1,178.2 831.0,177.7 834.5,177.0 836.2,177.2 839.4,177.7 842.3,177.0 844.6,176.5 845.8,175.1 846.7,172.1 847.6,169.5 848.4,167.8 847.6,165.3 845.5,166.4 844.9,168.6 844.1,171.3 842.3,172.5 839.4,172.6 838.0,174.7 833.6,175.6 830.1,177.0"/>
<polygon fill="#5aaa5a" points="844.9,165.1 847.0,164.6 851.1,164.3 854.5,162.0 852.8,160.8 848.4,158.2 847.6,161.1 845.5,162.5"/>
<polygon fill="#5aaa5a" points="827.1,179.1 829.2,178.2 831.0,180.0 829.6,183.0 827.8,183.0"/>
<polygon fill="#5aaa5a" points="831.8,179.1 835.3,177.9 834.8,179.5 832.4,180.3"/>
<polygon fill="#98cf98" points="810.4,197.4 811.8,193.4 813.5,193.9 812.3,197.8 811.4,199.4"/>
<polygon fill="#1b521b" points="790.3,203.9 793.4,202.5 794.3,203.6 791.7,205.8"/>
<polygon fill="#c6e2c6" points="590.2,175.1 597.4,176.1 600.5,173.9 615.5,173.2 619.7,172.8 618.0,178.4 620.6,180.0 623.5,180.2 633.7,184.7 635.4,181.6 642.4,181.7 644.2,182.4 652.9,183.1 656.9,182.9 660.2,182.9 661.4,186.1 664.9,199.2 665.5,203.4 669.5,210.4 675.8,217.3 690.1,217.0 686.0,227.1 679.6,234.1 674.7,238.3 669.8,244.6 669.1,249.5 671.2,255.9 671.6,263.8 661.3,272.2 657.4,283.0 654.6,289.8 645.2,297.0 635.4,298.4 632.6,297.3 629.3,291.7 626.7,283.0 625.8,277.8 621.5,265.5 623.9,259.6 623.5,253.0 622.0,248.1 615.7,238.6 617.4,230.6 611.0,230.1 606.4,226.4 600.5,228.0 593.5,228.3 587.1,229.9 581.6,226.6 577.5,222.8 576.6,221.0 571.2,216.1 570.0,211.9 572.6,206.2 570.8,201.3 575.2,192.0 583.7,184.5 587.2,178.9"/>
<polygon fill="#eef7ee" points="570.8,200.4 577.8,200.4 579.5,196.7 585.3,190.0 592.1,194.0 590.0,200.9 590.9,209.0 580.4,210.5 571.7,209.1 572.6,206.2"/>
<polygon fill="#ddf0dd" points="592.1,194.0 607.8,204.1 607.8,209.0 600.5,211.4 591.2,218.4 586.0,218.4 580.4,215.8 580.4,210.5 590.9,209.0 590.0,200.9"/>
<polygon fill="#eef7ee" points="607.8,204.1 610.6,203.7 621.5,196.6 625.0,198.1 627.6,201.8 626.7,210.5 624.2,214.0 606.8,217.2 600.8,213.2 600.5,211.4 607.8,209.0"/>
<polygon fill="#eef7ee" points="625.0,198.1 626.7,196.7 642.4,203.5 642.4,210.2 638.9,215.8 638.9,220.1 627.6,224.5 625.0,220.1 624.2,214.0 626.7,210.5 627.6,201.8"/>
<polygon fill="#5aaa5a" points="644.2,182.4 652.9,183.1 656.9,182.9 660.2,182.9 661.4,186.1 664.9,199.2 655.2,199.2 644.2,199.2"/>
<polygon fill="#eef7ee" points="675.8,217.3 690.1,217.0 686.0,227.1 679.6,234.1 674.7,238.3 672.1,240.6 672.1,232.7 679.1,228.9 684.1,223.6 675.6,221.0"/>
<polygon fill="#98cf98" points="606.4,226.4 611.0,230.1 615.3,229.7 621.5,223.6 625.0,215.8 624.2,214.0 606.8,217.2 605.2,221.9 605.2,226.6"/>
<polygon fill="#eef7ee" points="627.6,224.5 638.9,220.1 641.5,222.4 648.3,228.9 633.0,231.5 628.4,233.8"/>
<polygon fill="#eef7ee" points="622.0,248.1 629.3,250.7 638.6,249.8 638.9,256.8 642.4,260.3 638.9,260.3 638.9,266.4 641.5,268.2 623.2,267.8 621.5,265.5 623.9,259.6 623.5,253.0"/>
<polygon fill="#5aaa5a" points="629.3,287.4 635.4,287.4 635.4,280.9 644.2,282.5 646.8,280.4 652.0,276.0 655.2,276.7 656.4,284.4 657.4,283.0 654.6,289.8 645.2,297.0 635.4,298.4 632.6,297.3 629.3,291.7"/>
<polygon fill="#296a29" points="800.0,277.3 813.0,271.5 815.3,266.6 818.7,264.3 821.5,261.7 827.3,262.9 828.9,259.3 833.0,257.9 836.2,258.0 840.2,260.0 837.3,264.3 840.0,264.2 846.0,268.6 846.1,267.9 849.8,256.8 850.2,257.9 853.4,261.7 856.0,267.2 858.4,269.1 861.7,275.8 868.9,284.4 867.5,294.5 861.7,303.1 850.2,305.2 844.5,301.6 840.2,295.9 838.8,298.8 831.6,293.0 818.7,294.5 804.3,298.8 801.5,291.6 799.3,283.0"/>
<polygon fill="#296a29" points="853.8,309.5 860.3,309.5 857.4,313.8"/>
<polygon fill="#5aaa5a" points="902.0,297.7 905.2,300.5 907.6,303.1 912.2,303.4 909.5,306.2 907.8,309.2 905.7,309.7 906.0,306.6 904.0,306.0 905.4,302.2 902.6,299.2"/>
<polygon fill="#5aaa5a" points="904.8,309.2 902.6,313.6 899.6,315.3 895.6,319.0 891.2,317.9 893.8,314.8 899.1,310.9 902.0,308.3"/>
<polygon fill="#ddf0dd" points="686.6,258.6 688.7,264.7 684.0,280.3 679.1,282.1 677.3,272.5 678.2,265.5"/>
<polygon fill="#c6e2c6" points="321.3,198.5 323.1,198.5 323.1,199.5 321.3,199.5"/>
<polygon fill="#c6e2c6" points="328.0,202.9 330.4,202.9 330.4,204.3 328.0,204.3"/>
<polygon fill="#c6e2c6" points="356.8,253.4 358.2,253.4 358.2,254.2 356.8,254.2"/>
<polygon fill="#c6e2c6" points="299.5,260.5 300.9,260.5 300.9,261.3 299.5,261.3"/>
<polygon fill="#c6e2c6" points="337.3,267.6 338.7,267.6 338.7,268.4 337.3,268.4"/>
<polygon fill="#c6e2c6" points="293.3,273.9 294.5,273.9 294.5,274.7 293.3,274.7"/>
<polygon fill="#c6e2c6" points="572.6,187.7 574.2,187.7 574.2,188.7 572.6,188.7"/>
<polygon fill="#c6e2c6" points="557.3,208.6 558.7,208.6 558.7,209.4 557.3,209.4"/>
<polygon fill="#c6e2c6" points="911.7,266.0 913.3,266.0 913.3,267.0 911.7,267.0"/>
<polygon fill="#c6e2c6" points="865.0,243.4 867.0,243.4 867.0,244.6 865.0,244.6"/>
<polygon fill="#c6e2c6" points="698.2,249.5 699.8,249.5 699.8,250.5 698.2,250.5"/>
<polygon fill="#c6e2c6" points="692.2,272.5 693.8,272.5 693.8,273.5 692.2,273.5"/>
<polygon fill="#c6e2c6" points="491.7,208.8 493.3,208.8 493.3,209.8 491.7,209.8"/>
<polygon fill="#c6e2c6" points="492.9,214.3 494.3,214.3 494.3,215.1 492.9,215.1"/>
<polygon fill="#c6e2c6" points="496.2,215.4 497.6,215.4 497.6,216.2 496.2,216.2"/>
<polygon fill="#c6e2c6" points="489.4,206.6 490.6,206.6 490.6,207.4 489.4,207.4"/>
</g><g stroke="#eea014" stroke-width="1.7" stroke-linejoin="round">
<polygon fill="#ddf0dd" points="476.0,101.0 493.3,95.0 519.9,92.3 546.6,91.7 563.9,94.3 579.9,95.0 565.2,99.7 563.9,109.0 562.6,115.6 545.2,118.3 534.6,123.6 525.3,131.6 515.9,130.3 509.3,121.0 505.3,111.6 497.3,105.0 480.0,102.3"/>
<polygon fill="#98cf98" points="472.5,309.0 470.0,314.0 469.5,320.0 471.0,326.0 475.0,331.0 481.0,334.5 486.7,333.4 480.6,328.5 476.9,324.0 478.5,313.8"/>
</g><g stroke="#eea014" stroke-width="1.9" stroke-linejoin="round">
<polygon fill="#296a29" points="381.2,111.8 388.0,109.0 398.0,108.5 408.0,109.5 418.0,110.5 425.0,113.0 423.0,115.5 412.0,116.0 400.0,115.5 390.0,114.5 383.0,113.5"/>
<polygon fill="#296a29" points="386.0,104.4 395.0,103.0 405.0,103.5 416.9,104.5 416.0,106.5 405.0,107.5 393.0,106.5"/>
<polygon fill="#296a29" points="416.9,99.5 425.0,99.0 430.0,101.0 424.0,102.5 418.0,102.0"/>
<polygon fill="#296a29" points="420.0,104.5 432.0,103.5 440.0,105.0 447.0,106.0 444.0,109.0 436.0,109.5 428.0,109.0 421.0,107.5"/>
<polygon fill="#296a29" points="431.6,97.0 445.0,95.0 460.0,94.0 475.0,93.0 490.0,93.5 495.6,94.6 488.0,97.0 478.0,99.5 468.0,103.0 460.0,106.5 450.0,107.0 440.0,104.0 432.0,100.5"/>
<polygon fill="#296a29" points="439.0,110.6 450.0,109.5 462.0,111.0 472.0,113.0 482.0,116.0 493.1,121.0 488.0,124.0 478.0,124.5 466.0,127.8 460.0,124.0 452.0,120.0 444.0,116.0"/>
<polygon fill="#296a29" points="426.0,112.0 436.0,111.0 440.0,114.5 434.0,117.0 427.0,116.0"/>
<polygon fill="#296a29" points="447.0,118.0 456.0,119.5 460.0,125.0 452.0,127.0 446.0,123.0"/>
<line x1="391.6" y1="112.5" x2="396.1" y2="112.6" stroke-width="1.3"/>
<line x1="408.6" y1="110.0" x2="411.7" y2="110.3" stroke-width="1.3"/>
<line x1="392.6" y1="110.9" x2="399.5" y2="110.8" stroke-width="1.3"/>
<line x1="417.8" y1="112.1" x2="423.4" y2="111.8" stroke-width="1.3"/>
<line x1="409.0" y1="114.2" x2="414.1" y2="114.4" stroke-width="1.3"/>
<line x1="410.6" y1="110.0" x2="416.6" y2="110.1" stroke-width="1.3"/>
<line x1="394.4" y1="109.8" x2="400.9" y2="109.8" stroke-width="1.3"/>
<line x1="412.7" y1="114.2" x2="418.5" y2="114.7" stroke-width="1.3"/>
<line x1="398.5" y1="113.8" x2="403.3" y2="114.3" stroke-width="1.3"/>
<line x1="419.7" y1="110.1" x2="423.2" y2="109.9" stroke-width="1.3"/>
<line x1="423.5" y1="111.9" x2="429.0" y2="111.7" stroke-width="1.3"/>
<line x1="403.4" y1="111.7" x2="407.8" y2="111.7" stroke-width="1.3"/>
<line x1="406.8" y1="114.4" x2="412.5" y2="114.8" stroke-width="1.3"/>
<line x1="418.7" y1="114.8" x2="424.4" y2="114.5" stroke-width="1.3"/>
<line x1="412.6" y1="106.7" x2="419.2" y2="106.8" stroke-width="1.3"/>
<line x1="408.1" y1="104.3" x2="414.4" y2="104.4" stroke-width="1.3"/>
<line x1="394.8" y1="103.9" x2="401.2" y2="104.4" stroke-width="1.3"/>
<line x1="388.7" y1="106.2" x2="393.4" y2="105.8" stroke-width="1.3"/>
<line x1="395.1" y1="106.1" x2="401.6" y2="105.6" stroke-width="1.3"/>
<line x1="405.0" y1="103.8" x2="410.9" y2="103.6" stroke-width="1.3"/>
<line x1="428.4" y1="101.9" x2="433.5" y2="102.4" stroke-width="1.3"/>
<line x1="421.0" y1="99.7" x2="426.4" y2="99.2" stroke-width="1.3"/>
<line x1="425.3" y1="106.1" x2="430.8" y2="105.8" stroke-width="1.3"/>
<line x1="421.1" y1="108.0" x2="425.4" y2="108.5" stroke-width="1.3"/>
<line x1="444.2" y1="106.0" x2="449.1" y2="106.0" stroke-width="1.3"/>
<line x1="437.4" y1="106.9" x2="442.6" y2="107.0" stroke-width="1.3"/>
<line x1="445.4" y1="106.5" x2="450.1" y2="106.7" stroke-width="1.3"/>
<line x1="426.4" y1="105.7" x2="433.3" y2="105.7" stroke-width="1.3"/>
<line x1="434.8" y1="104.4" x2="439.5" y2="104.5" stroke-width="1.3"/>
<line x1="432.9" y1="101.1" x2="438.4" y2="100.7" stroke-width="1.3"/>
<line x1="471.7" y1="99.7" x2="477.5" y2="99.5" stroke-width="1.3"/>
<line x1="476.8" y1="102.3" x2="479.9" y2="101.9" stroke-width="1.3"/>
<line x1="474.9" y1="104.5" x2="478.9" y2="104.5" stroke-width="1.3"/>
<line x1="469.5" y1="98.2" x2="474.0" y2="98.0" stroke-width="1.3"/>
<line x1="455.2" y1="100.9" x2="459.4" y2="100.8" stroke-width="1.3"/>
<line x1="481.0" y1="95.4" x2="486.3" y2="95.6" stroke-width="1.3"/>
<line x1="451.4" y1="97.3" x2="457.7" y2="97.0" stroke-width="1.3"/>
<line x1="443.6" y1="99.4" x2="449.4" y2="99.0" stroke-width="1.3"/>
<line x1="452.2" y1="98.4" x2="458.5" y2="98.3" stroke-width="1.3"/>
<line x1="486.4" y1="96.8" x2="490.7" y2="96.9" stroke-width="1.3"/>
<line x1="488.2" y1="99.5" x2="492.1" y2="99.1" stroke-width="1.3"/>
<line x1="465.5" y1="97.0" x2="471.7" y2="97.3" stroke-width="1.3"/>
<line x1="443.3" y1="97.8" x2="449.6" y2="98.0" stroke-width="1.3"/>
<line x1="483.2" y1="98.5" x2="486.7" y2="98.3" stroke-width="1.3"/>
<line x1="482.4" y1="97.8" x2="486.8" y2="97.7" stroke-width="1.3"/>
<line x1="458.5" y1="99.1" x2="465.1" y2="98.8" stroke-width="1.3"/>
<line x1="431.9" y1="104.3" x2="438.4" y2="104.8" stroke-width="1.3"/>
<line x1="459.4" y1="104.4" x2="466.1" y2="104.1" stroke-width="1.3"/>
<line x1="479.3" y1="103.3" x2="485.0" y2="103.3" stroke-width="1.3"/>
<line x1="450.1" y1="98.4" x2="454.0" y2="98.0" stroke-width="1.3"/>
<line x1="469.3" y1="97.9" x2="475.5" y2="97.5" stroke-width="1.3"/>
<line x1="489.4" y1="101.9" x2="496.1" y2="102.3" stroke-width="1.3"/>
<line x1="489.2" y1="100.8" x2="492.2" y2="101.0" stroke-width="1.3"/>
<line x1="442.6" y1="98.0" x2="448.2" y2="98.1" stroke-width="1.3"/>
<line x1="458.1" y1="104.3" x2="463.5" y2="104.1" stroke-width="1.3"/>
<line x1="447.8" y1="103.5" x2="452.7" y2="103.8" stroke-width="1.3"/>
<line x1="454.1" y1="97.0" x2="459.3" y2="97.4" stroke-width="1.3"/>
<line x1="442.6" y1="102.9" x2="449.3" y2="103.2" stroke-width="1.3"/>
<line x1="484.3" y1="95.2" x2="489.8" y2="95.5" stroke-width="1.3"/>
<line x1="434.8" y1="97.8" x2="438.9" y2="97.8" stroke-width="1.3"/>
<line x1="458.7" y1="99.7" x2="464.8" y2="99.2" stroke-width="1.3"/>
<line x1="435.1" y1="96.3" x2="438.6" y2="95.9" stroke-width="1.3"/>
<line x1="494.0" y1="103.5" x2="497.3" y2="103.5" stroke-width="1.3"/>
<line x1="451.8" y1="98.2" x2="456.2" y2="98.3" stroke-width="1.3"/>
<line x1="469.1" y1="98.6" x2="472.9" y2="98.5" stroke-width="1.3"/>
<line x1="439.5" y1="100.5" x2="445.4" y2="100.4" stroke-width="1.3"/>
<line x1="436.7" y1="96.8" x2="441.2" y2="97.0" stroke-width="1.3"/>
<line x1="481.7" y1="98.8" x2="487.9" y2="98.9" stroke-width="1.3"/>
<line x1="459.2" y1="98.7" x2="464.2" y2="99.0" stroke-width="1.3"/>
<line x1="461.7" y1="121.1" x2="466.6" y2="120.9" stroke-width="1.3"/>
<line x1="468.0" y1="121.2" x2="471.3" y2="121.1" stroke-width="1.3"/>
<line x1="462.0" y1="123.5" x2="468.8" y2="123.4" stroke-width="1.3"/>
<line x1="487.6" y1="122.4" x2="491.6" y2="122.3" stroke-width="1.3"/>
<line x1="445.7" y1="122.7" x2="451.3" y2="123.0" stroke-width="1.3"/>
<line x1="481.9" y1="120.8" x2="487.8" y2="120.9" stroke-width="1.3"/>
<line x1="444.6" y1="119.8" x2="447.6" y2="119.4" stroke-width="1.3"/>
<line x1="480.9" y1="112.8" x2="484.3" y2="112.4" stroke-width="1.3"/>
<line x1="486.6" y1="114.5" x2="489.7" y2="114.9" stroke-width="1.3"/>
<line x1="445.6" y1="123.1" x2="451.3" y2="123.4" stroke-width="1.3"/>
<line x1="490.5" y1="119.7" x2="496.7" y2="119.2" stroke-width="1.3"/>
<line x1="480.5" y1="118.8" x2="486.4" y2="118.4" stroke-width="1.3"/>
<line x1="479.5" y1="124.2" x2="482.8" y2="124.0" stroke-width="1.3"/>
<line x1="469.5" y1="122.9" x2="473.5" y2="122.5" stroke-width="1.3"/>
<line x1="452.5" y1="120.1" x2="458.5" y2="120.0" stroke-width="1.3"/>
<line x1="458.9" y1="117.3" x2="463.3" y2="117.2" stroke-width="1.3"/>
<line x1="443.5" y1="118.7" x2="450.4" y2="118.6" stroke-width="1.3"/>
<line x1="479.4" y1="114.3" x2="485.2" y2="114.6" stroke-width="1.3"/>
<line x1="475.5" y1="118.9" x2="480.4" y2="119.0" stroke-width="1.3"/>
<line x1="487.5" y1="114.2" x2="490.9" y2="114.4" stroke-width="1.3"/>
<line x1="488.6" y1="118.9" x2="493.4" y2="119.1" stroke-width="1.3"/>
<line x1="449.1" y1="115.7" x2="452.9" y2="115.8" stroke-width="1.3"/>
<line x1="456.0" y1="115.2" x2="461.8" y2="115.7" stroke-width="1.3"/>
<line x1="455.0" y1="121.3" x2="459.7" y2="121.6" stroke-width="1.3"/>
<line x1="470.6" y1="115.7" x2="474.5" y2="115.2" stroke-width="1.3"/>
<line x1="464.9" y1="117.1" x2="468.6" y2="117.0" stroke-width="1.3"/>
<line x1="456.4" y1="122.2" x2="460.0" y2="122.7" stroke-width="1.3"/>
<line x1="464.9" y1="119.9" x2="469.8" y2="120.3" stroke-width="1.3"/>
<line x1="483.4" y1="119.4" x2="488.4" y2="119.6" stroke-width="1.3"/>
<line x1="485.3" y1="117.4" x2="491.3" y2="117.8" stroke-width="1.3"/>
<line x1="464.3" y1="115.2" x2="468.2" y2="115.4" stroke-width="1.3"/>
<line x1="475.5" y1="124.5" x2="482.0" y2="124.3" stroke-width="1.3"/>
<line x1="449.3" y1="115.6" x2="453.0" y2="115.8" stroke-width="1.3"/>
<line x1="485.5" y1="123.8" x2="489.5" y2="124.1" stroke-width="1.3"/>
<line x1="456.0" y1="117.7" x2="461.9" y2="117.3" stroke-width="1.3"/>
<line x1="444.0" y1="122.9" x2="448.2" y2="122.8" stroke-width="1.3"/>
<line x1="470.4" y1="120.9" x2="473.4" y2="120.7" stroke-width="1.3"/>
<line x1="462.6" y1="118.5" x2="466.4" y2="118.6" stroke-width="1.3"/>
<line x1="490.7" y1="117.3" x2="495.9" y2="116.9" stroke-width="1.3"/>
<line x1="453.9" y1="120.8" x2="457.3" y2="121.2" stroke-width="1.3"/>
<line x1="488.2" y1="113.5" x2="494.9" y2="113.4" stroke-width="1.3"/>
<line x1="480.8" y1="121.9" x2="485.0" y2="122.1" stroke-width="1.3"/>
<line x1="474.4" y1="122.6" x2="478.4" y2="122.8" stroke-width="1.3"/>
<line x1="491.0" y1="120.9" x2="496.2" y2="120.5" stroke-width="1.3"/>
<line x1="465.7" y1="116.8" x2="471.6" y2="116.9" stroke-width="1.3"/>
<line x1="433.9" y1="112.7" x2="439.5" y2="112.8" stroke-width="1.3"/>
<line x1="428.5" y1="115.6" x2="434.1" y2="115.3" stroke-width="1.3"/>
<line x1="439.0" y1="112.5" x2="443.4" y2="112.7" stroke-width="1.3"/>
<line x1="454.4" y1="122.8" x2="460.0" y2="122.8" stroke-width="1.3"/>
<line x1="450.4" y1="120.5" x2="453.6" y2="120.7" stroke-width="1.3"/>
<line x1="456.6" y1="122.8" x2="462.5" y2="122.6" stroke-width="1.3"/>
<line x1="449.7" y1="121.8" x2="456.2" y2="121.3" stroke-width="1.3"/>
<line x1="453.1" y1="120.9" x2="459.1" y2="120.8" stroke-width="1.3"/>
</g><g stroke="#eea014" stroke-width="1.25" stroke-linejoin="round">
<polyline fill="none" points="597.4,176.1 598.4,181.6 594.2,183.8 585.3,187.5 585.3,190.0"/>
<polyline fill="none" points="615.5,173.2 615.0,177.2 617.1,184.9 617.4,190.5 621.5,196.6"/>
<polyline fill="none" points="620.6,180.0 617.1,184.9"/>
<polyline fill="none" points="644.2,199.2 644.2,202.7 642.4,203.5"/>
<polyline fill="none" points="664.2,212.6 659.9,221.0 658.1,230.6 652.9,231.3 648.3,228.9 641.5,222.4 638.9,220.1"/>
<polyline fill="none" points="664.2,212.6 669.5,210.4"/>
<polyline fill="none" points="675.6,221.0 684.1,223.6 679.1,228.9 673.7,230.6 666.8,231.3 661.6,229.7 659.9,222.6"/>
<polyline fill="none" points="571.2,216.1 579.5,215.8 580.4,215.8 586.0,218.4 591.2,218.4 600.5,211.4"/>
<polyline fill="none" points="576.6,221.0 586.0,218.4 587.1,229.9"/>
<polyline fill="none" points="591.2,218.4 593.5,228.3"/>
<polyline fill="none" points="600.8,213.2 600.5,228.0"/>
<polyline fill="none" points="605.2,221.9 606.8,217.2"/>
<polyline fill="none" points="617.6,233.6 628.4,233.8 632.0,238.5 624.1,245.8 622.0,248.1"/>
<polyline fill="none" points="631.0,231.5 632.0,238.5"/>
<polyline fill="none" points="652.9,231.3 654.1,235.5 652.2,240.2 651.7,245.5 653.8,252.1 650.3,252.4 651.1,259.1 645.0,257.7 642.4,260.3"/>
<polyline fill="none" points="638.6,249.8 629.3,250.7"/>
<polyline fill="none" points="660.0,229.7 659.9,239.3 666.2,243.2 669.8,244.6"/>
<polyline fill="none" points="652.2,240.2 659.9,239.3"/>
<polyline fill="none" points="653.8,252.1 658.1,254.2 661.6,257.7 671.2,255.9"/>
<polyline fill="none" points="658.1,254.2 658.5,262.0 661.6,262.1 661.6,257.7"/>
<polyline fill="none" points="641.5,268.2 644.7,268.7 649.4,267.3 653.6,264.8 658.5,262.0"/>
<polyline fill="none" points="653.6,264.8 657.2,270.8 655.2,276.7 656.4,284.4"/>
<polyline fill="none" points="644.7,268.7 645.9,270.8 652.0,276.0"/>
<polyline fill="none" points="637.2,269.6 635.4,276.0 635.4,287.4"/>
<polyline fill="none" points="635.4,280.9 644.2,282.5 646.8,280.4 652.0,276.0"/>
<polyline fill="none" points="636.3,117.0 631.9,118.0 625.8,122.4 621.5,126.7 622.3,131.1 621.3,134.6 620.1,134.4"/>
<polyline fill="none" points="501.0,227.1 501.0,234.1"/>
<polyline fill="none" points="506.2,227.6 506.2,233.8"/>
<polyline fill="none" points="873.0,249.0 876.0,251.0"/>
<polyline fill="none" points="878.0,252.5 883.0,256.5"/>
<polyline fill="none" points="891.5,263.2 892.8,266.8"/>
<polyline fill="none" points="887.5,272.5 893.0,277.0"/>
</g></g>
<g fill="#003a00">
<rect x="278" y="81" width="18" height="54" rx="9"/>
<rect x="269" y="99" width="36" height="18" rx="9"/>
<rect x="278" y="140" width="18" height="54" rx="9"/>
</g>
<g fill="#fff">
<path d="M287,85 L292,94 L282,94 Z"/>
<path d="M287,131 L292,122 L282,122 Z"/>
<path d="M273,108 L282,103 L282,113 Z"/>
<path d="M301,108 L292,103 L292,113 Z"/>
<rect x="282" y="149.2" width="10" height="2.2"/>
<rect x="285.9" y="145.3" width="2.2" height="10"/>
<rect x="282" y="182.5" width="10" height="2.2"/>
</g>
<g fill="none" stroke="#8f8fff" stroke-width="0.8">
<circle cx="287" cy="166.8" r="7.8"/>
<ellipse cx="287" cy="166.8" rx="3.5" ry="7.8"/>
<line x1="287" y1="159" x2="287" y2="174.6"/>
<line x1="279.2" y1="166.8" x2="294.8" y2="166.8"/>
<line x1="280.5" y1="162.8" x2="293.5" y2="162.8"/>
<line x1="280.5" y1="170.8" x2="293.5" y2="170.8"/>
</g>
</svg>
<div class="abs tk" style="right:10px;top:885px;-webkit-text-stroke:0.15px currentColor;font-size:12px;line-height:14px;font-style:italic;color:#111;text-align:right;white-space:nowrap">InCites Essential Science Indicators dataset updated May 08, 2025.<br>For more information <span style="color:#1a6598">Click Here</span></div>
</body></html>
